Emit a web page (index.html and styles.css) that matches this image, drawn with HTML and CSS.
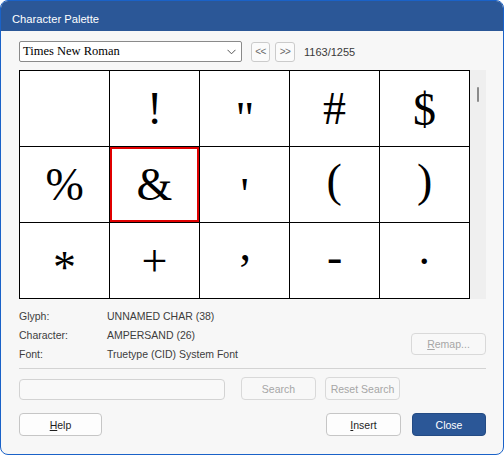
FILE: index.html
```html
<!DOCTYPE html>
<html lang="en">
<head>
<meta charset="utf-8">
<title>Character Palette</title>
<link rel="stylesheet" href="styles.css">
</head>
<body>
<div class="window">
  <div class="titlebar">Character Palette</div>
  <div class="content">
    <div class="toolbar">
      <div class="select">
        <span class="select-text">Times New Roman</span>
        <svg class="chevron" width="9" height="6" viewBox="0 0 9 6"><path d="M0.5 0.8 L4.5 4.8 L8.5 0.8" fill="none" stroke="#555" stroke-width="1"/></svg>
      </div>
      <button class="nav nav-prev">&lt;&lt;</button>
      <button class="nav nav-next">&gt;&gt;</button>
      <span class="count">1163/1255</span>
    </div>
    <div class="gridwrap">
      <div class="grid">
        <div class="cell"><span class="glyph"> </span></div>
        <div class="cell"><span class="glyph">!</span></div>
        <div class="cell"><span class="glyph">"</span></div>
        <div class="cell"><span class="glyph">#</span></div>
        <div class="cell"><span class="glyph">$</span></div>
        <div class="cell"><span class="glyph">%</span></div>
        <div class="cell selected"><span class="glyph">&amp;</span></div>
        <div class="cell"><span class="glyph">'</span></div>
        <div class="cell"><span class="glyph">(</span></div>
        <div class="cell"><span class="glyph">)</span></div>
        <div class="cell"><span class="glyph">*</span></div>
        <div class="cell"><span class="glyph">+</span></div>
        <div class="cell"><span class="glyph">,</span></div>
        <div class="cell"><span class="glyph">-</span></div>
        <div class="cell"><span class="glyph">.</span></div>
      </div>
      <div class="scrollbar"><div class="thumb"></div></div>
    </div>
    <div class="info">
      <div class="props">
        <span class="label">Glyph:</span><span class="value">UNNAMED CHAR (38)</span>
        <span class="label">Character:</span><span class="value">AMPERSAND (26)</span>
        <span class="label">Font:</span><span class="value">Truetype (CID) System Font</span>
      </div>
      <button class="btn remap" disabled><u>R</u>emap...</button>
    </div>
    <div class="sep"></div>
    <div class="searchrow">
      <input class="search" type="text">
      <button class="btn search-btn" disabled>Search</button>
      <button class="btn reset-btn" disabled>Reset Search</button>
    </div>
    <div class="footer">
      <button class="btn help"><u>H</u>elp</button>
      <span class="spacer"></span>
      <button class="btn insert"><u>I</u>nsert</button>
      <button class="btn primary">Close</button>
    </div>
  </div>
</div>
<script src="script.js"></script>
</body>
</html>
```

FILE: styles.css
```css
html, body {
  margin: 0;
  padding: 0;
  background: #ffffff;
}
.window {
  width: 504px;
  height: 455px;
  box-sizing: border-box;
  border: 1px solid #1a62c8;
  border-radius: 8px;
  overflow: hidden;
  background: #f7f7f7;
  font-family: "Liberation Sans", Arial, sans-serif;
  font-size: 10.5px;
  color: #3a3a3a;
}
.titlebar {
  height: 30px;
  box-sizing: border-box;
  padding: 6px 0 0 11px;
  display: flex;
  align-items: center;
  background: #2b5797;
  color: #ffffff;
  font-size: 11.2px;
}
.content {
  padding: 10px 17px 0 18px;
}
.toolbar {
  display: flex;
  align-items: center;
  height: 21px;
}
.select {
  width: 223px;
  height: 21px;
  box-sizing: border-box;
  border: 1px solid #8a8a8a;
  border-radius: 2px;
  background: #ffffff;
  display: flex;
  align-items: center;
  padding: 0 5px 0 3px;
}
.select-text {
  flex: 1;
  font-family: "Liberation Serif", "Times New Roman", serif;
  font-size: 12.5px;
  color: #000;
}
.chevron {
  display: block;
}
.nav {
  height: 20px;
  box-sizing: border-box;
  border: 1px solid #cbcbcb;
  border-radius: 3px;
  background: #fbfbfb;
  color: #6a6a6a;
  font-family: "Liberation Sans", Arial, sans-serif;
  font-size: 10px;
  padding: 0;
  letter-spacing: -0.5px;
}
.nav-prev {
  width: 19px;
  margin-left: 9px;
}
.nav-next {
  width: 20px;
  margin-left: 5px;
}
.count {
  margin-left: 9px;
  font-size: 11px;
  color: #3a3a3a;
}
.gridwrap {
  display: flex;
  margin-top: 8px;
}
.grid {
  display: grid;
  grid-template-columns: repeat(5, 90px);
  grid-auto-rows: 76px;
  border-left: 1px solid #000;
  border-top: 1px solid #000;
  background: #ffffff;
}
.cell {
  border-right: 1px solid #000;
  border-bottom: 1px solid #000;
  display: flex;
  align-items: center;
  justify-content: center;
}
.cell.selected {
  box-shadow: inset 0 0 0 2px #e00000;
}
.glyph {
  font-family: "Liberation Serif", "Times New Roman", serif;
  font-size: 46px;
  color: #000;
  white-space: pre;
}
.base {
  display: inline-block;
  width: 0;
  height: 0;
  vertical-align: baseline;
}
.scrollbar {
  width: 16px;
  background: #efefef;
}
.thumb {
  width: 2px;
  height: 15px;
  margin: 17px 0 0 7px;
  background: #8a8a8a;
  border-radius: 1px;
}
.info {
  display: flex;
  margin-top: 8px;
}
.props {
  display: grid;
  grid-template-columns: 88px auto;
  line-height: 19px;
  color: #3d3d3d;
}
.btn {
  height: 23px;
  box-sizing: border-box;
  border: 1px solid #c6c6c6;
  border-radius: 4px;
  background: #fdfdfd;
  color: #1e1e1e;
  font-family: "Liberation Sans", Arial, sans-serif;
  font-size: 10.5px;
  padding: 0;
}
.btn:disabled {
  border-color: #d9d9d9;
  background: #f8f8f8;
  color: #a6a6a6;
}
.remap {
  margin-left: auto;
  margin-top: 26px;
  width: 75px;
  height: 22px;
}
.sep {
  height: 1px;
  background: #d3d3d3;
  margin-top: 4px;
}
.searchrow {
  display: flex;
  align-items: flex-end;
  margin-top: 8px;
}
.search {
  width: 206px;
  height: 21px;
  box-sizing: border-box;
  border: 1px solid #d3d3d3;
  border-radius: 4px;
  background: #f9f9f9;
  margin: 0 16px 0 0;
  padding: 0 4px;
}
.search-btn {
  width: 75px;
}
.reset-btn {
  width: 75px;
  margin-left: 9px;
}
.footer {
  display: flex;
  margin-top: 13px;
}
.help {
  width: 83px;
}
.spacer {
  flex: 1;
}
.insert {
  width: 75px;
}
.primary {
  width: 74px;
  margin-left: 11px;
  background: #2b5797;
  border-color: #244b84;
  color: #ffffff;
}
```

FILE: script.js
```js
function centerGlyphs() {
  var ctx = document.createElement('canvas').getContext('2d');
  document.querySelectorAll('.cell .glyph').forEach(function (g) {
    var t = g.textContent;
    if (!t.trim()) return;
    var cs = getComputedStyle(g);
    ctx.font = cs.fontSize + ' ' + cs.fontFamily;
    var m = ctx.measureText(t);
    var mark = document.createElement('i');
    mark.className = 'base';
    g.insertBefore(mark, g.firstChild);
    var mr = mark.getBoundingClientRect();
    var cell = g.parentElement;
    var cr = cell.getBoundingClientRect();
    var originX = mr.left;
    var baseY = mr.top;
    mark.remove();
    var inkCy = baseY - (m.actualBoundingBoxAscent - m.actualBoundingBoxDescent) / 2;
    var inkCx = originX + (m.actualBoundingBoxRight - m.actualBoundingBoxLeft) / 2;
    var dy = cr.top + cell.clientHeight / 2 - inkCy;
    var dx = cr.left + cell.clientWidth / 2 - inkCx;
    g.style.transform = 'translate(' + dx.toFixed(2) + 'px,' + dy.toFixed(2) + 'px)';
  });
}
if (document.fonts && document.fonts.ready) {
  document.fonts.ready.then(centerGlyphs);
} else {
  centerGlyphs();
}
```
